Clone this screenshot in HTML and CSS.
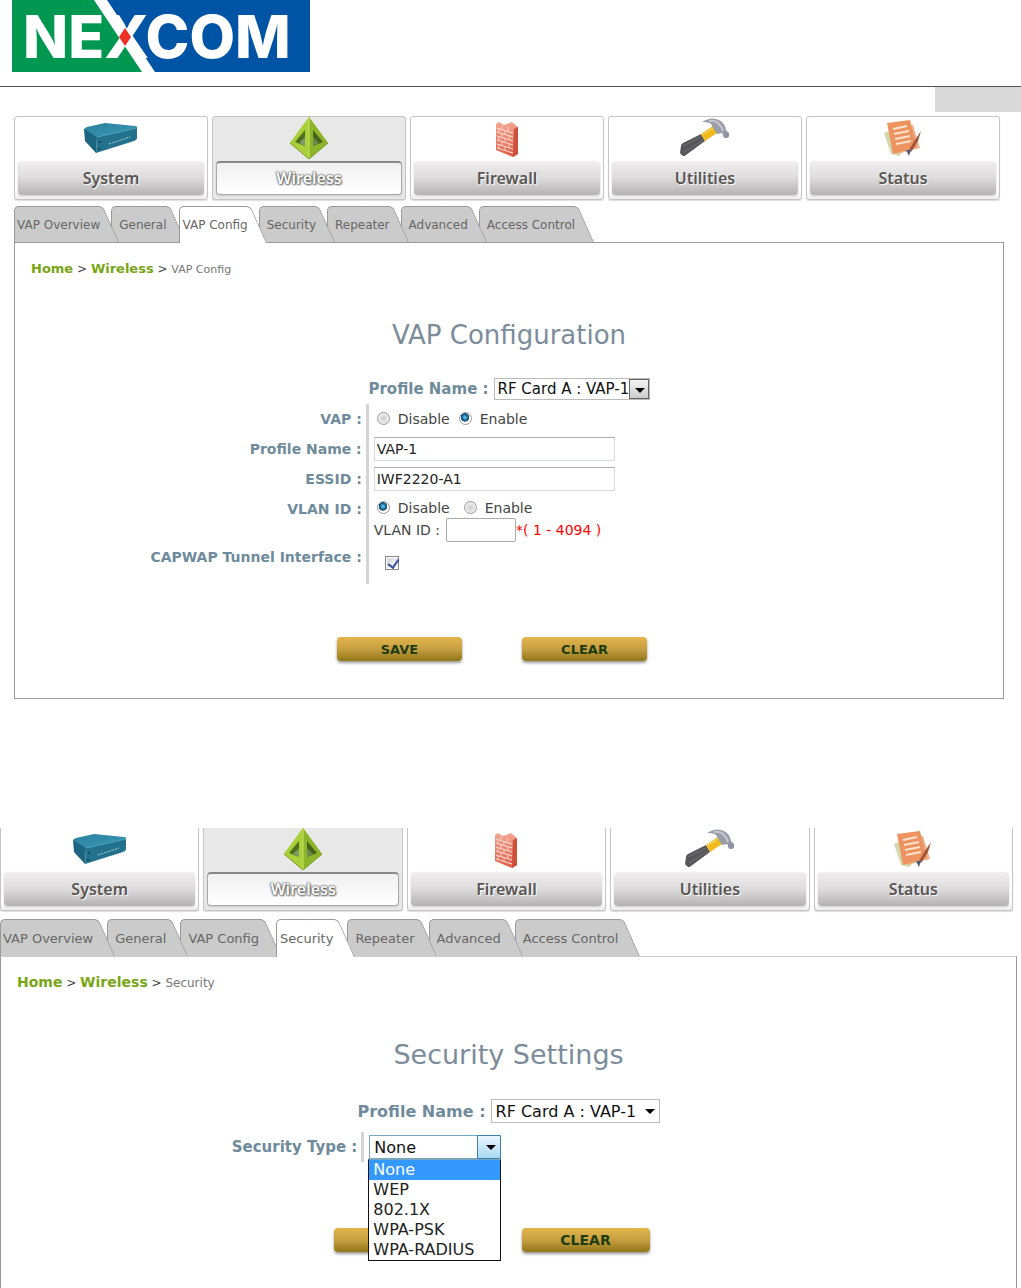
FILE: index.html
```html
<!DOCTYPE html>
<html lang="en">
<head>
    <meta charset="UTF-8">
    <meta name="viewport" content="width=device-width, initial-scale=1.0">
    <title>VAP Configuration</title>
    <link rel="stylesheet" href="styles.css">
</head>
<body>
    <!-- Icons used by both menus -->
    <svg class="sprite" aria-hidden="true">
        <defs>
            <linearGradient id="teal" x1="0" y1="0" x2="1" y2="1">
                <stop offset="0" stop-color="#2b7f9c"/>
                <stop offset="1" stop-color="#3a9bb8"/>
            </linearGradient>
            <linearGradient id="lime" x1="0" y1="0" x2="0" y2="1">
                <stop offset="0" stop-color="#b6d63c"/>
                <stop offset="1" stop-color="#8fb82c"/>
            </linearGradient>
            <linearGradient id="brick" x1="0" y1="0" x2="0" y2="1">
                <stop offset="0" stop-color="#f3a592"/>
                <stop offset="1" stop-color="#dd5f48"/>
            </linearGradient>
        </defs>
        <symbol id="icon-system" viewBox="0 0 56 42">
            <path d="M1 13 Q1 11 4 10 L22 6 L52 9 Q55 9 54 12 L14 21 Z" fill="url(#teal)"/>
            <path d="M1 12 L14 20 L13 36 L2 24 Z" fill="#1c6580"/>
            <path d="M14 20 L54 11 V21 Q54 23 51 24 L13 36 Z" fill="#22718d"/>
            <path d="M14 20 L54 11" stroke="#4ba3bd" fill="none"/>
            <path d="M26 27 L47 20" stroke="#a6cfc8" stroke-dasharray="2 1" fill="none"/>
            <circle cx="17" cy="25" r="1" fill="#0e4256"/>
            <circle cx="16" cy="32" r="1" fill="#0e4256"/>
        </symbol>
        <symbol id="icon-wireless" viewBox="0 0 56 42">
            <path d="M28 0 L47 26 L28 42 L9 26 Z" fill="url(#lime)"/>
            <path d="M28 0 L9 26 L28 42 Z" fill="#a9cf3a"/>
            <path d="M28 0 L47 26 L28 42 Z" fill="#8cb52c"/>
            <path d="M24 13 V29 L14 25 Z" fill="#4f6f1c"/>
            <path d="M24 20 V29 L18 26 Z" fill="#7d9a6a"/>
            <path d="M32 13 V29 L42 25 Z" fill="#46631c"/>
            <path d="M32 20 V29 L38 26 Z" fill="#6d8a50"/>
            <path d="M28 1 V41" stroke="#c5e25a" fill="none"/>
            <path d="M9 26 L28 42 L47 26" stroke="#789f22" fill="none"/>
        </symbol>
        <symbol id="icon-firewall" viewBox="0 0 56 42">
            <path d="M17 7 L20 5 L25 8 L33 5 L39 10 V37 L34 40 L17 33 Z" fill="url(#brick)"/>
            <path d="M35 12 L39 10 V37 L34 40 Z" fill="#cf4f3d"/>
            <path d="M18 11 L34 16 M18 15 L34 20 M18 19 L34 24 M18 23 L34 28 M18 27 L34 32 M18 31 L34 36" stroke="#fbe0d8" fill="none"/>
            <path d="M23 8 V12 M29 10 V14 M20 12 V16 M26 13 V17 M23 17 V21 M30 19 V23 M20 20 V24 M26 22 V26 M23 25 V29 M30 27 V31 M20 28 V32 M26 30 V34" stroke="#f8cfc4" fill="none"/>
        </symbol>
        <symbol id="icon-utilities" viewBox="0 0 56 42">
            <path d="M3 36 L4 29 Q4 27 6 26 L24 17 L28 24 L9 38 Q6 41 3 36 Z" fill="#57575b"/>
            <path d="M6 29 L24 20 M7 35 L26 23" stroke="#6f6f75" fill="none"/>
            <path d="M24 17 L36 9 L40 16 L28 24 Z" fill="#f0b91c"/>
            <path d="M25 18 L36 11" stroke="#fbe074" fill="none"/>
            <path d="M25 5 Q34 -1 42 3 Q48 6 49 13 L52 16 Q53 21 48 21 L45 16 L40 17 L35 9 Q35 5 25 5 Z" fill="#9a9ca8"/>
            <path d="M32 4 Q39 3 42 7 Q45 10 46 14" stroke="#c5c7d0" stroke-width="2" fill="none"/>
            <circle cx="49" cy="18" r="3" fill="#9292a8"/>
        </symbol>
        <symbol id="icon-status" viewBox="0 0 56 42">
            <path d="M9 16 L14 14 L20 36 L29 34 L24 39 L16 37 Z" fill="#d3d8ac"/>
            <path d="M18 12 L38 8 L45 31 L22 37 Z" fill="#e9b48a"/>
            <path d="M12 6 L35 3 L42 30 L18 37 Z" fill="#ec935f"/>
            <path d="M18 12 L32 9 M19 17 L34 14 M20 22 L35 19 M21 27 L36 24" stroke="#fde3cf" stroke-width="2" fill="none"/>
            <path d="M46 14 L43 24 L36 35 L34 33 L40 23 Z" fill="#a0543c"/>
            <path d="M31 33 L36 33 L34 39 Z" fill="#4b5f78"/>
        </symbol>
    </svg>

    <header class="page-header">
        <svg class="logo" viewBox="0 0 298 72" role="img" aria-label="NEXCOM">
            <rect width="298" height="72" fill="#0054a6"/>
            <path d="M0 0 H88 L136 72 H0 Z" fill="#009850"/>
            <path d="M82 0 H95 L143 72 H130 Z" fill="#fff"/>
            <text class="logo-text" x="11" y="58">NEXCOM</text>
            <path d="M113 28 L119 37 L113 46 L107 37 Z" fill="#ee3124"/>
        </svg>
    </header>
    <div class="page-tag"></div>

    <!-- VAP Config -->
    <section class="screen">
        <nav class="menu">
            <a href="#"><svg><use href="#icon-system"/></svg><span>System</span></a>
            <a href="#" class="active"><svg><use href="#icon-wireless"/></svg><span>Wireless</span></a>
            <a href="#"><svg><use href="#icon-firewall"/></svg><span>Firewall</span></a>
            <a href="#"><svg><use href="#icon-utilities"/></svg><span>Utilities</span></a>
            <a href="#"><svg><use href="#icon-status"/></svg><span>Status</span></a>
        </nav>
        <nav class="tabs">
            <a href="#">VAP Overview</a>
            <a href="#">General</a>
            <a href="#" class="active">VAP Config</a>
            <a href="#">Security</a>
            <a href="#">Repeater</a>
            <a href="#">Advanced</a>
            <a href="#">Access Control</a>
        </nav>
        <form class="panel">
            <p class="breadcrumb"><a href="#">Home</a> &gt; <a href="#">Wireless</a> &gt; <span>VAP Config</span></p>
            <h1>VAP Configuration</h1>
            <div class="profile">
                <label for="profile">Profile Name :</label>
                <span class="select boxed">
                    <select id="profile"><option>RF Card A : VAP-1</option></select>
                </span>
            </div>
            <div class="fields">
                <div class="name" id="vap-label">VAP :</div>
                <div class="value" role="group" aria-labelledby="vap-label">
                    <label><input type="radio" name="vap">Disable</label>
                    <label><input type="radio" name="vap" checked>Enable</label>
                </div>

                <label class="name" for="name">Profile Name :</label>
                <div class="value"><input type="text" id="name" value="VAP-1"></div>

                <label class="name" for="essid">ESSID :</label>
                <div class="value"><input type="text" id="essid" value="IWF2220-A1"></div>

                <div class="name top" id="vlan-label">VLAN ID :</div>
                <div class="value vlan" role="group" aria-labelledby="vlan-label">
                    <div class="line">
                        <label><input type="radio" name="vlan" checked>Disable</label>
                        <label><input type="radio" name="vlan">Enable</label>
                    </div>
                    <div class="line">
                        <label for="vlan-id">VLAN ID :</label>
                        <input type="text" id="vlan-id" class="short">
                        <span class="hint">*( 1 - 4094 )</span>
                    </div>
                </div>

                <label class="name top" for="capwap">CAPWAP Tunnel Interface :</label>
                <div class="value tall"><input type="checkbox" id="capwap" checked></div>
            </div>
            <div class="buttons">
                <button type="button">SAVE</button>
                <button type="reset">CLEAR</button>
            </div>
        </form>
    </section>

    <!-- Security -->
    <section class="screen large">
        <nav class="menu">
            <a href="#"><svg><use href="#icon-system"/></svg><span>System</span></a>
            <a href="#" class="active"><svg><use href="#icon-wireless"/></svg><span>Wireless</span></a>
            <a href="#"><svg><use href="#icon-firewall"/></svg><span>Firewall</span></a>
            <a href="#"><svg><use href="#icon-utilities"/></svg><span>Utilities</span></a>
            <a href="#"><svg><use href="#icon-status"/></svg><span>Status</span></a>
        </nav>
        <nav class="tabs">
            <a href="#">VAP Overview</a>
            <a href="#">General</a>
            <a href="#">VAP Config</a>
            <a href="#" class="active">Security</a>
            <a href="#">Repeater</a>
            <a href="#">Advanced</a>
            <a href="#">Access Control</a>
        </nav>
        <form class="panel">
            <p class="breadcrumb"><a href="#">Home</a> &gt; <a href="#">Wireless</a> &gt; <span>Security</span></p>
            <h1>Security Settings</h1>
            <div class="profile">
                <label for="profile2">Profile Name :</label>
                <span class="select">
                    <select id="profile2"><option>RF Card A : VAP-1</option></select>
                </span>
            </div>
            <div class="fields">
                <label class="name" for="security">Security Type :</label>
                <div class="value">
                    <span class="select open">
                        <select id="security"><option>None</option></select>
                        <ul class="options">
                            <li class="selected">None</li>
                            <li>WEP</li>
                            <li>802.1X</li>
                            <li>WPA-PSK</li>
                            <li>WPA-RADIUS</li>
                        </ul>
                    </span>
                </div>
            </div>
            <div class="buttons">
                <button type="button" aria-label="Save"></button>
                <button type="reset">CLEAR</button>
            </div>
        </form>
    </section>
</body>
</html>
```
FILE: styles.css
```css
* {
    box-sizing: border-box;
}
body {
    display: flex;
    flex-direction: column;
    min-height: 100vh;
    margin: 0;
    background-color: #fff;
    color: #444;
    font-family: "DejaVu Sans", Verdana, sans-serif;
    font-size: 14px;
}
a {
    text-decoration: none;
}
.sprite {
    position: absolute;
    width: 0;
    height: 0;
}

/* Header */
.page-header {
    height: 87px;
    padding-left: 12px;
    border-bottom: 1px solid #555;
}
.logo {
    display: block;
    width: 298px;
    height: 72px;
}
.logo-text {
    fill: #fff;
    font-family: Inter, "Liberation Sans", Arial, sans-serif;
    font-size: 59px;
    font-weight: 800;
}
.page-tag {
    align-self: flex-end;
    width: 86px;
    height: 25px;
    background-color: #d9d9d9;
}

.screen {
    margin: 4px 17px 0 14px;
}
.screen.large {
    display: flex;
    flex-direction: column;
    flex: 1;
    margin: 129px 4px 0 0;
}

/* Main menu */
.menu {
    display: grid;
    grid-template-columns: repeat(5, 1fr);
    gap: 4px;
    padding-right: 4px;
}
.menu a {
    display: flex;
    flex-direction: column;
    height: 84px;
    padding: 0 3px;
    border: 1px solid #c4c4c4;
    border-radius: 3px;
    background: linear-gradient(#fff 90%, #eee);
    box-shadow: 0 1px 1px #ddd;
    color: #5a5552;
    font: 600 16px/34px "Noto Sans", sans-serif;
    text-align: center;
}
.menu svg {
    width: 56px;
    height: 42px;
    margin: 0 auto 2px;
}
.menu span {
    height: 34px;
    border-radius: 4px;
    background: linear-gradient(#f0eeee, #dddbdb 50%, #b4b2b2);
    box-shadow: 0 1px 2px #ccc;
    text-shadow: 1px 1px 1px #fff;
}
.menu .active {
    background: #e8e8e8;
}
.menu .active span {
    border: 1px solid #aaa;
    border-top: 2px solid #888;
    background: linear-gradient(#f0f0f0, #fff);
    color: #fff;
    line-height: 30px;
    text-shadow: 0 0 2px #444, 0 0 2px #666, 1px 1px 2px #777;
}
.large .menu a {
    height: 83px;
    border-top: 0;
    border-radius: 0 0 3px 3px;
}

/* Tabs with a slanted right side */
.tabs {
    display: flex;
    height: 36px;
    margin-top: 6px;
    font-size: 12px;
}
.tabs a {
    position: relative;
    z-index: 1;
    margin-right: -8px;
    padding: 0 19px 0 8px;
    color: #666;
    line-height: 39px;
    white-space: nowrap;
}
.tabs a::before,
.tabs a::after {
    content: "";
    position: absolute;
    z-index: -1;
    top: 0;
    bottom: 0;
    background-color: #cbcbcb;
    border-top: 1px solid #999;
}
.tabs a::before {
    left: 0;
    right: 20px;
    border-left: 1px solid #999;
    border-top-left-radius: 5px;
}
.tabs a::after {
    right: 0;
    width: 28px;
    border-right: 1px solid #999;
    border-top-right-radius: 5px;
    transform: skewX(24deg);
    transform-origin: bottom;
}
.tabs a:nth-child(1) { z-index: 7; padding-left: 3px; }
.tabs a:nth-child(2) { z-index: 6; }
.tabs a:nth-child(3) { z-index: 5; }
.tabs a:nth-child(4) { z-index: 4; }
.tabs a:nth-child(5) { z-index: 3; }
.tabs a:nth-child(6) { z-index: 2; }
.tabs .active.active {
    z-index: 8;
    margin-left: 1px;
    padding-left: 4px;
    height: 37px;
}
.tabs .active::before,
.tabs .active::after {
    background-color: #fff;
}
.large .tabs {
    height: 37px;
    margin-top: 8px;
    font-size: 13px;
}
.large .tabs a {
    padding-right: 22px;
}
.large .tabs .active.active {
    height: 38px;
    margin-left: 3px;
}

/* Panel */
.panel {
    padding-bottom: 37px;
    border: 1px solid #999;
}
.large .panel {
    flex: 1;
    padding-bottom: 0;
    border-top-color: #ccc;
    border-bottom: 0;
}
.breadcrumb {
    margin: 16px 16px 0;
    font-size: 12px;
    line-height: 20px;
}
.breadcrumb a {
    color: #78a515;
    font-size: 13px;
    font-weight: bold;
}
.breadcrumb span {
    color: #777;
    font-size: 11px;
}
.large .breadcrumb {
    margin-top: 15px;
}
.large .breadcrumb a {
    font-size: 14px;
}
.large .breadcrumb span {
    font-size: 12px;
}
h1 {
    margin: 39px 0 0;
    color: #7b8c9a;
    font-size: 26px;
    font-weight: normal;
    line-height: 32px;
    text-align: center;
}
.large h1 {
    margin-top: 46px;
    font-size: 27px;
}
.profile {
    display: flex;
    justify-content: center;
    align-items: center;
    gap: 5px;
    margin: 27px 0 4px;
    color: #6f8b9b;
    font-size: 15px;
    font-weight: bold;
}
.large .profile {
    margin: 28px 0 9px;
    font-size: 16px;
}

/* Form rows: name | value */
.fields {
    display: grid;
    grid-template-columns: 71fr 129fr;
}
.name {
    align-self: center;
    padding-right: 4px;
    color: #6f8b9b;
    font-weight: bold;
    line-height: 18px;
    text-align: right;
}
.name.top {
    align-self: start;
    padding-top: 6px;
}
.value {
    display: flex;
    align-items: center;
    min-height: 30px;
    padding-left: 5px;
    border-left: 3px solid #d4d4d4;
}
.value.vlan {
    display: block;
    padding-top: 4px;
    min-height: 48px;
}
.value.tall {
    min-height: 42px;
}
.line {
    display: flex;
    align-items: center;
    min-height: 20px;
}
.large .name {
    font-size: 15px;
}

input[type="text"] {
    width: 241px;
    height: 24px;
    padding: 0 2px;
    border: 1px solid #d5dae2;
    border-top-color: #abadb3;
    color: #222;
    font: inherit;
}
input[type="text"].short {
    width: 70px;
    margin-left: 6px;
    border: 1px solid #aaa;
    border-radius: 2px;
}
.hint {
    color: #f00;
}
input[type="radio"] {
    appearance: none;
    width: 13px;
    height: 13px;
    margin: 0 8px 0 3px;
    border: 1px solid #999;
    border-radius: 50%;
    background: radial-gradient(#ccc, #fff);
    vertical-align: -1px;
}
input[type="radio"]:checked {
    background: radial-gradient(circle at 45% 40%, #6fd0f5 0, #1b6f9f 30%, #14486b 44%, #fff 50%);
}
.value label + label {
    margin-left: 6px;
}
.vlan label + label {
    margin-left: 11px;
}
input[type="checkbox"] {
    appearance: none;
    width: 14px;
    height: 14px;
    margin: 0 0 0 11px;
    border: 1px solid #888;
    background: linear-gradient(135deg, #ccd2dc, #fff);
    box-shadow: inset 0 0 0 1px #fff;
}
input[type="checkbox"]:checked::after {
    content: "";
    display: block;
    width: 5px;
    height: 9px;
    margin: 0 0 0 4px;
    border: solid #3b4f9c;
    border-width: 0 2px 2px 0;
    transform: rotate(35deg);
}

/* Drop-downs */
.select {
    position: relative;
    display: inline-block;
    width: 169px;
}
.select.boxed {
    width: 156px;
}
.select.open {
    width: 132px;
}
select {
    display: block;
    appearance: none;
    width: 100%;
    height: 24px;
    padding: 0 4px;
    border: 1px solid #bbb;
    border-radius: 0;
    background-color: #fff;
    color: #111;
    font: 16px "DejaVu Sans", Verdana, sans-serif;
}
.boxed select {
    height: 22px;
    padding: 0 3px;
    font-size: 15px;
}
.select::before {
    content: "";
    position: absolute;
    right: 5px;
    top: 10px;
    border: 5px solid transparent;
    border-top-color: #000;
    border-bottom: 0;
}
.boxed::after,
.open::after {
    content: "";
    position: absolute;
    top: 1px;
    right: 1px;
    bottom: 1px;
    width: 18px;
    border: 1px solid #666;
    background: linear-gradient(#f4f4f4, #ccc);
}
.boxed::before,
.open::before {
    z-index: 1;
}
.open::after {
    top: 0;
    right: 0;
    bottom: 0;
    width: 22px;
    border-color: #3c7fb1;
    border-radius: 0 2px 2px 0;
    background: linear-gradient(#eaf6fd, #a9d9f2);
}
.open select {
    border-color: #7aa5bf;
}
.options {
    position: absolute;
    z-index: 2;
    top: 24px;
    left: -1px;
    right: 0;
    margin: 0;
    padding: 0;
    border: 1px solid #111;
    border-top-color: #7aa5bf;
    background-color: #fff;
    color: #222;
    font-size: 16px;
    line-height: 20px;
    list-style: none;
}
.options li {
    padding-left: 4px;
}
.options .selected {
    background-color: #3399ff;
    color: #fff;
}

/* Buttons */
.buttons {
    display: flex;
    justify-content: center;
    gap: 60px;
    margin-top: 53px;
    padding-right: 34px;
}
.large .buttons {
    margin-top: 66px;
}
button {
    width: 125px;
    height: 24px;
    padding: 0;
    border: 0;
    border-radius: 4px;
    background: linear-gradient(#e3b54a, #c79f42 50%, #8f7616);
    box-shadow: 0 2px 3px #999;
    color: #1d3c10;
    font: bold 13px "DejaVu Sans", Verdana, sans-serif;
    cursor: pointer;
}
.large button {
    width: 128px;
    font-size: 14px;
}
```
